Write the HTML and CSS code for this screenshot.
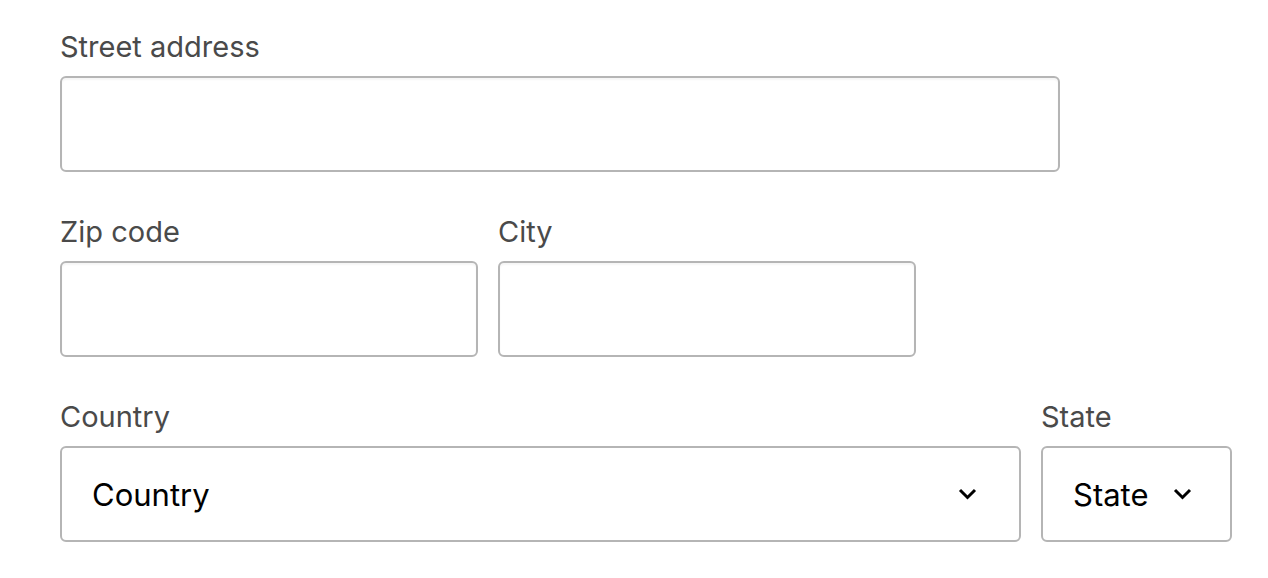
FILE: index.html
```html
<!DOCTYPE html>
<html>
<head>
  <title>Address form</title>
  <link rel="stylesheet" href="styles.css">
</head>
<body>
  <form class="address-form">
    <div class="form-row">
      <div class="field field-street">
        <label class="field-label" for="street">Street address</label>
        <input class="text-input" id="street" type="text">
      </div>
    </div>

    <div class="form-row">
      <div class="field field-half">
        <label class="field-label" for="zip">Zip code</label>
        <input class="text-input" id="zip" type="text">
      </div>
      <div class="field field-half">
        <label class="field-label" for="city">City</label>
        <input class="text-input" id="city" type="text">
      </div>
    </div>

    <div class="form-row">
      <div class="field field-country">
        <span class="field-label">Country</span>
        <div class="select-box">
          <span class="select-value">Country</span>
          <svg class="chevron" width="19" height="12" viewBox="0 0 19 12"><path d="M2 2l7.5 7.5L17 2" fill="none" stroke="#000" stroke-width="3"/></svg>
        </div>
      </div>
      <div class="field field-state">
        <span class="field-label">State</span>
        <div class="select-box">
          <span class="select-value">State</span>
          <svg class="chevron" width="19" height="12" viewBox="0 0 19 12"><path d="M2 2l7.5 7.5L17 2" fill="none" stroke="#000" stroke-width="3"/></svg>
        </div>
      </div>
    </div>
  </form>
</body>
</html>
```

FILE: styles.css
```css
body {
  margin: 0;
  padding: 0;
  background-color: #ffffff;
  font-family: Inter, "Liberation Sans", sans-serif;
}

.address-form {
  display: flex;
  flex-direction: column;
  gap: 41px;
  padding: 28px 0 0 60px;
}

.form-row {
  display: flex;
  gap: 20px;
}

.field {
  display: flex;
  flex-direction: column;
  flex-shrink: 0;
}

.field-street {
  width: 1000px;
}

.field-half {
  width: 418px;
}

.field-country {
  width: 961px;
}

.field-state {
  width: 191px;
}

.field-label {
  font-size: 29px;
  line-height: 38px;
  color: #4a4a4a;
  margin-bottom: 10px;
}

.text-input {
  box-sizing: border-box;
  height: 96px;
  width: 100%;
  margin: 0;
  border: 2px solid #b5b5b5;
  border-radius: 6px;
  background-color: #ffffff;
  box-shadow: inset 0 2px 2px rgba(0,0,0,0.04);
  font-size: 32px;
  padding: 0 30px;
  outline: none;
}

.select-box {
  box-sizing: border-box;
  height: 96px;
  display: flex;
  align-items: center;
  justify-content: space-between;
  gap: 24px;
  padding: 0 42px 0 30px;
  border: 2px solid #b5b5b5;
  border-radius: 6px;
  background-color: #ffffff;
}

.select-value {
  font-size: 31px;
  color: #000000;
}

.chevron {
  flex-shrink: 0;
}
```
